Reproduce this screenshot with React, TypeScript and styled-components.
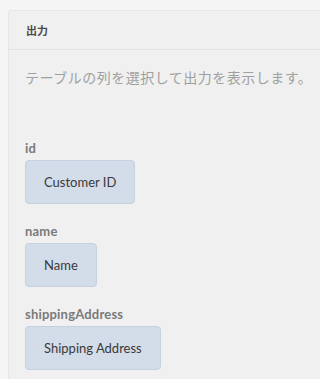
import React from "react";
import styled, { createGlobalStyle } from "styled-components";

const Global = createGlobalStyle`
  html, body { margin: 0; padding: 0; background: #f5f5f5; overflow: hidden; }
  body { font-family: Lato, "Noto Sans CJK JP", sans-serif; }
`;

const Page = styled.div`
  width: 320px;
  height: 379px;
  padding: 10px 0 0 8px;
  box-sizing: border-box;
  overflow: hidden;
`;

const Panel = styled.section`
  width: 330px;
  height: 400px;
  background: #f0f0f0;
  border: 1px solid #e6e6e6;
  border-radius: 3px 0 0 0;
  box-sizing: border-box;
`;

const Header = styled.div`
  height: 38px;
  display: flex;
  align-items: center;
  padding-left: 17px;
  border-bottom: 1px solid #e3e3e3;
  font-family: "Noto Sans CJK JP", sans-serif;
  font-size: 11px;
  font-weight: 700;
  color: #4a4a4a;
`;

const Body = styled.div`
  padding: 17px 16px 0 16px;
`;

const Placeholder = styled.p`
  margin: 0;
  font-family: "Noto Sans CJK JP", sans-serif;
  font-size: 14px;
  line-height: 20px;
  letter-spacing: 0.5px;
  color: #a0a0a0;
  white-space: nowrap;
`;

const FieldList = styled.div`
  margin-top: 53px;
  display: flex;
  flex-direction: column;
  gap: 19px;
`;

const Field = styled.div`
  display: flex;
  flex-direction: column;
  align-items: flex-start;
  gap: 4px;
`;

const Label = styled.div`
  font-size: 13px;
  font-weight: 700;
  line-height: 16px;
  color: #7a7a7a;
  letter-spacing: 0.2px;
`;

const Chip = styled.div`
  height: 44px;
  box-sizing: border-box;
  padding: 0 18px;
  display: flex;
  align-items: center;
  background: #d3dce9;
  border: 1px solid #c5d0e0;
  border-radius: 4px;
  font-size: 13px;
  color: #3a3a3a;
`;

const fields = [
  { key: "id", label: "Customer ID" },
  { key: "name", label: "Name" },
  { key: "shippingAddress", label: "Shipping Address" },
];

export default function App() {
  return (
    <>
      <Global />
      <Page>
        <Panel>
          <Header>出力</Header>
          <Body>
            <Placeholder>テーブルの列を選択して出力を表示します。</Placeholder>
            <FieldList>
              {fields.map((f) => (
                <Field key={f.key}>
                  <Label>{f.key}</Label>
                  <Chip>{f.label}</Chip>
                </Field>
              ))}
            </FieldList>
          </Body>
        </Panel>
      </Page>
    </>
  );
}
